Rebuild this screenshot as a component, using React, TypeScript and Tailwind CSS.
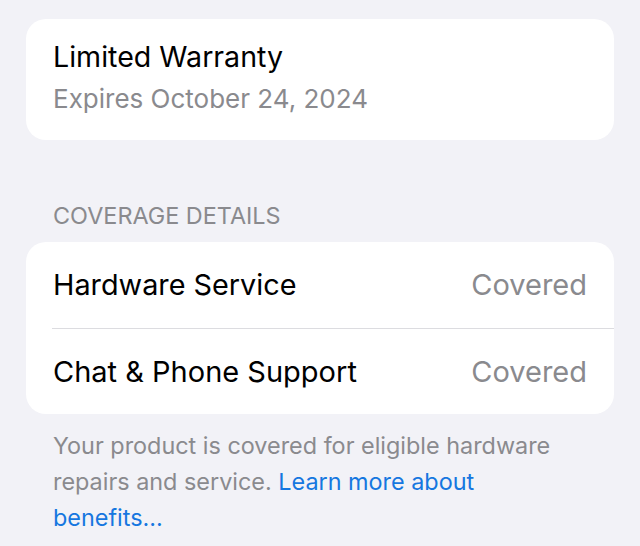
export default function App() {
  return (
    <div className="min-h-[546px] w-full bg-[#f2f2f7] font-['Inter','Noto_Sans',sans-serif] pt-[19px]">
      <div className="mx-[26px] rounded-[20px] bg-white px-[27px] pt-[20px] pb-[25px]">
        <div className="text-[28.6px] leading-[36px] text-black">Limited Warranty</div>
        <div className="mt-[8px] text-[26px] leading-[32px] text-[#8a8a8e]">Expires October 24, 2024</div>
      </div>

      <div className="mt-[62px] px-[53px] text-[23.4px] leading-[28px] text-[#8a8a8e] uppercase">
        Coverage Details
      </div>

      <div className="mx-[26px] mt-[12px] rounded-[20px] bg-white">
        <div className="flex h-[86px] items-center justify-between pl-[27px] pr-[27px]">
          <span className="text-[28.8px] text-black">Hardware Service</span>
          <span className="text-[29px] text-[#8a8a8e]">Covered</span>
        </div>
        <div className="ml-[26px] h-px bg-[#dcdce0]" />
        <div className="flex h-[85px] items-center justify-between pl-[27px] pr-[27px]">
          <span className="text-[29px] text-black">Chat &amp; Phone Support</span>
          <span className="text-[29px] text-[#8a8a8e]">Covered</span>
        </div>
      </div>

      <p className="px-[53px] pr-[60px] pt-[14px] text-[23.4px] leading-[36px] text-[#8a8a8e]">
        Your product is covered for eligible hardware repairs and service.{" "}
        <span className="text-[#1677e0]">Learn more about benefits...</span>
      </p>
    </div>
  );
}
